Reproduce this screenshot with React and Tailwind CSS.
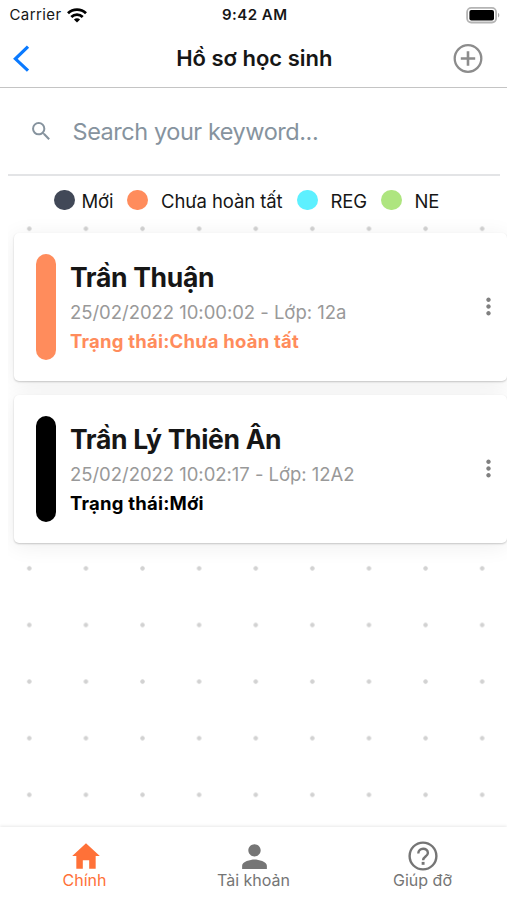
import { IoMdHome, IoMdPerson } from "react-icons/io";
import { MdSearch, MdMoreVert } from "react-icons/md";

const legend = [
  { label: "Mới", dot: "ml-[54px] bg-[#414857]", text: "ml-[7px] w-[33px]" },
  { label: "Chưa hoàn tất", dot: "ml-[12.5px] bg-[#ff8c5c]", text: "ml-[13.5px] w-[123px]" },
  { label: "REG", dot: "ml-[13px] bg-[#5df0ff]", text: "ml-[13px] w-[38px]" },
  { label: "NE", dot: "ml-[12.5px] bg-[#aee57f]", text: "ml-[13px] w-[30px]" },
];

const students = [
  {
    name: "Trần Thuận",
    info: "25/02/2022 10:00:02 - Lớp: 12a",
    status: "Chưa hoàn tất",
    bar: "bg-[#ff8c5c]",
    color: "text-[#ff8c5c]",
  },
  {
    name: "Trần Lý Thiên Ân",
    info: "25/02/2022 10:02:17 - Lớp: 12A2",
    status: "Mới",
    bar: "bg-black",
    color: "text-black",
  },
];

function StatusBar() {
  return (
    <div className="flex h-[30px] items-center text-[15px] leading-[30px] text-[#161616]">
      <div className="flex flex-1 items-center pl-[9.5px]">
        <span className="tracking-[0.4px]">Carrier</span>
        <svg className="ml-[6px] h-[15px] w-[20px]" viewBox="0 0 20 15" fill="none" stroke="#000" strokeWidth="2.8">
          <path d="M1 5.2C6 .4 14 .4 19 5.2" />
          <path d="M4.3 8.9c3.2-3.1 8.2-3.1 11.4 0" />
          <path d="M10 14.6 6.9 11.5c1.7-1.6 4.5-1.6 6.2 0z" fill="#000" stroke="none" />
        </svg>
      </div>
      <span className="font-semibold tracking-[0.5px]">9:42 AM</span>
      <div className="flex flex-1 justify-end pr-[7px]">
        <svg className="h-[17px] w-[34px]" viewBox="0 0 34 17">
          <rect x="1.1" y="0.9" width="29" height="14.6" rx="4.2" fill="none" stroke="#b4b4b4" strokeWidth="1.8" />
          <rect x="3.4" y="3" width="24.6" height="10.4" rx="2" />
          <path d="M32 6c1.7.6 1.7 3.8 0 4.4z" fill="#aaa" />
        </svg>
      </div>
    </div>
  );
}

function StudentCard({ name, info, status, bar, color }) {
  return (
    <div className="flex h-[148px] rounded-[5px] bg-white pt-[21px] pl-[21.5px] shadow-[0_1px_2px_rgba(0,0,0,0.2),0_3px_22px_rgba(0,0,0,0.07)]">
      <div className={`h-[105.5px] w-[20.5px] rounded-full ${bar}`} />
      <div className="ml-[14px] flex-1 whitespace-nowrap">
        <div className="mt-[5px] text-[26.5px] leading-[37px] font-bold tracking-[-0.32px] text-[#161616]">{name}</div>
        <div className="mt-[1px] text-[18.5px] leading-[30px] tracking-[-0.03px] text-[#999]">{info}</div>
        <div className={`text-[18.5px] leading-[29px] font-bold tracking-[0.22px] ${color}`}>Trạng thái:{status}</div>
      </div>
      <MdMoreVert className="mt-[39px] mr-[5.5px] size-[27px] text-[#808080]" />
    </div>
  );
}

function HelpIcon() {
  return (
    <svg className="size-[30px]" viewBox="0 0 30 30" fill="none" stroke="currentColor" strokeWidth="2.4">
      <circle cx="15" cy="15" r="13.4" />
      <path d="M10.3 12.4c0-6.2 9.6-6.1 9.6-.4 0 3.4-4.8 3.7-4.8 7.2" />
      <path d="M15.1 20.9v2.9" strokeWidth="2.9" />
    </svg>
  );
}

function Tab({ icon, label, active }) {
  return (
    <div className={`flex flex-1 flex-col items-center pt-[11px] ${active ? "text-[#ff7138]" : "text-[#757575]"}`}>
      <div className="flex h-[36px] items-center">{icon}</div>
      <span className="text-[16px] leading-[13px]">{label}</span>
    </div>
  );
}

export default function App() {
  return (
    <div className="flex h-[900px] w-[507px] flex-col overflow-hidden bg-white font-['Inter','Noto_Sans',sans-serif]">
      <StatusBar />
      <header className="flex h-[58px] items-center border-b-[1.5px] border-[#c4c4c4]">
        <div className="flex-1 pl-[12px]">
          <svg className="h-[28px] w-[18px]" viewBox="0 0 18 28" fill="none" stroke="#0a7aff" strokeWidth="3.2">
            <path d="M16 1.6 3.4 13.8 16 25.6" />
          </svg>
        </div>
        <h1 className="text-[22px] font-semibold text-[#161616]">Hồ sơ học sinh</h1>
        <div className="flex w-[174.5px] justify-end pr-[24px]">
          <svg className="size-[30px]" viewBox="0 0 30 30" fill="none" stroke="#8c8c8c" strokeWidth="2.3">
            <circle cx="15" cy="14.5" r="13.3" />
            <path d="M15 7.3v14.4M7.8 14.5h14.4" strokeWidth="2.6" />
          </svg>
        </div>
      </header>
      <div className="mr-[7px] ml-[8px] flex h-[88px] items-center border-b-2 border-[#e3e4e6] pl-[21px] text-[#86939e]">
        <MdSearch className="size-[24.5px]" />
        <span className="mt-[2px] ml-[19px] text-[23.5px] tracking-[-0.45px]">Search your keyword...</span>
      </div>
      <div className="flex h-[39px] items-center pt-[9px] text-[18.5px] leading-[28px] text-[#161616]">
        {legend.map((l) => (
          <div key={l.label} className="flex items-center">
            <span className={`size-[20.5px] rounded-full ${l.dot}`} />
            <span className={`mt-[2px] tracking-[-0.1px] whitespace-nowrap ${l.text}`}>{l.label}</span>
          </div>
        ))}
      </div>
      <main className="flex-1 overflow-hidden bg-[radial-gradient(circle,#d2d2d2_1.8px,transparent_2.6px)] bg-[length:56.62px_56.62px] bg-[position:1px_-14.6px]">
        <div className="ml-[8px] flex h-[400px] flex-col gap-[14px] overflow-hidden pt-[18px] pl-[6px]">
          {students.map((s) => (
            <StudentCard key={s.name} {...s} />
          ))}
        </div>
      </main>
      <nav className="flex h-[73px] bg-white shadow-[0_-1px_3px_rgba(0,0,0,0.09)]">
        <Tab active icon={<IoMdHome className="ml-[2px] size-[34px]" />} label="Chính" />
        <Tab icon={<IoMdPerson className="ml-[2px] size-[33px]" />} label="Tài khoản" />
        <Tab icon={<HelpIcon />} label="Giúp đỡ" />
      </nav>
    </div>
  );
}
